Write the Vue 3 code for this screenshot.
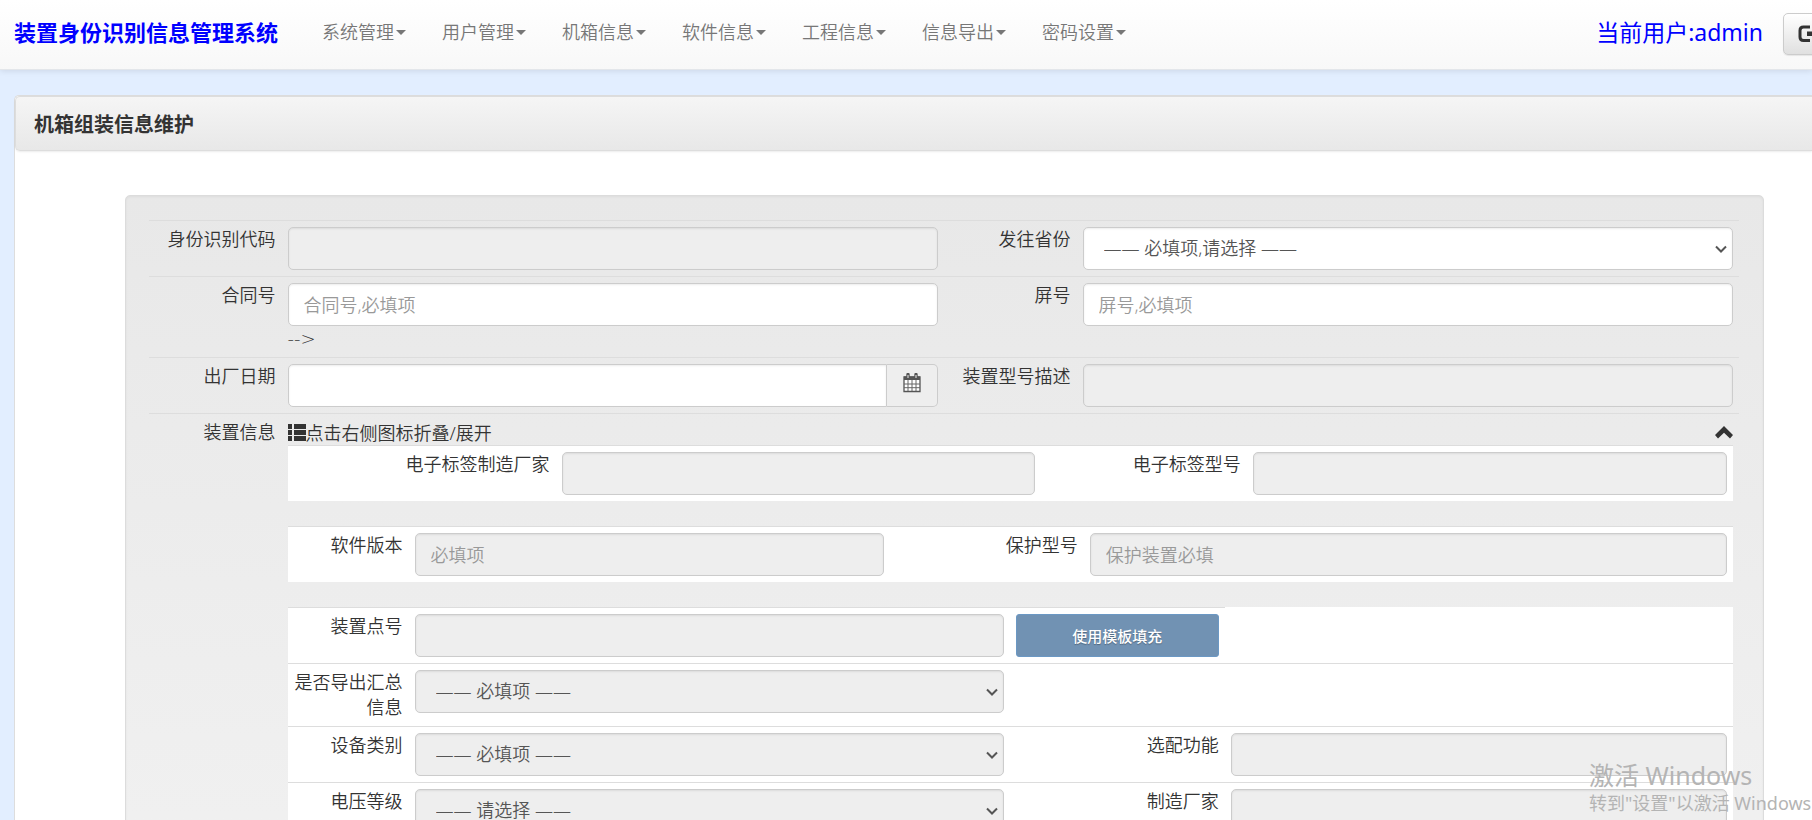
<script setup>
import { ref } from 'vue'

const menus = ['系统管理', '用户管理', '机箱信息', '软件信息', '工程信息', '信息导出', '密码设置']
const expanded = ref(true)
</script>

<template>
  <div class="page">
    <header class="navbar">
      <a class="brand" href="#">装置身份识别信息管理系统</a>
      <nav class="menu">
        <a v-for="name in menus" :key="name" class="menu-link" href="#">
          <span>{{ name }}</span><i class="caret"></i>
        </a>
      </nav>
      <a class="user" href="#">当前用户:admin</a>
      <button class="logout" type="button" aria-label="退出">
        <svg width="20" height="18" viewBox="0 0 20 18" aria-hidden="true">
          <path d="M12 2H5.500Q2 2 2 5.500V12Q2 15.500 5.500 15.500H12" fill="none" stroke="#333" stroke-width="3" />
          <path d="M9 6.500H14V2L20 8.700L14 15.500V11H9Z" fill="#333" />
        </svg>
      </button>
    </header>

    <main class="panel">
      <h1 class="panel-heading">机箱组装信息维护</h1>

      <form class="well" @submit.prevent>
        <div class="row outer">
          <label class="name" for="code">身份识别代码</label>
          <div class="cell"><input id="code" class="control" type="text" disabled></div>
          <label class="name" for="province">发往省份</label>
          <div class="cell">
            <select id="province" class="control"><option>—— 必填项,请选择 ——</option></select>
          </div>
        </div>

        <div class="row outer">
          <label class="name" for="contract">合同号</label>
          <div class="cell">
            <input id="contract" class="control" type="text" placeholder="合同号,必填项">
            <div class="note">--&gt;</div>
          </div>
          <label class="name" for="screen">屏号</label>
          <div class="cell"><input id="screen" class="control" type="text" placeholder="屏号,必填项"></div>
        </div>

        <div class="row outer">
          <label class="name" for="date">出厂日期</label>
          <div class="cell input-group">
            <input id="date" class="control" type="text">
            <button class="addon" type="button" aria-label="选择日期">
              <svg width="18" height="20" viewBox="0 0 18 20" aria-hidden="true">
                <path d="M1 4H17V18.500H1Z" fill="#fff" stroke="#555" stroke-width="1.300" />
                <path d="M1 3.500H17V7H1Z" fill="#555" />
                <path d="M5 7V18M9 7V18M13 7V18M1 11H17M1 14.700H17" fill="none" stroke="#666" stroke-width="1" />
                <path d="M5 1.500V5M13 1.500V5" fill="none" stroke="#555" stroke-width="3.400" stroke-linecap="round" />
                <path d="M5 2V5M13 2V5" fill="none" stroke="#eee" stroke-width="1" />
              </svg>
            </button>
          </div>
          <label class="name" for="model-desc">装置型号描述</label>
          <div class="cell"><input id="model-desc" class="control" type="text" disabled></div>
        </div>

        <div class="row device">
          <div class="name">装置信息</div>
          <div class="cell">
            <button class="toggle" type="button" :aria-expanded="expanded" @click="expanded = !expanded">
              <svg width="18" height="17" viewBox="0 0 18 17" aria-hidden="true">
                <path d="M0 0H4V5H0ZM6 0H18V5H6ZM0 6H4V11H0ZM6 6H18V11H6ZM0 12H4V17H0ZM6 12H18V17H6Z" fill="#333" />
              </svg>
              <span class="toggle-text">点击右侧图标折叠/展开</span>
              <svg width="18" height="13" viewBox="0 0 18 13" aria-hidden="true">
                <path d="M9 0L18 9L15 12.500L9 6.800L3 12.500L0 9Z" fill="#333" />
              </svg>
            </button>

            <template v-if="expanded">
              <section class="block">
                <div class="row tag">
                  <label class="name" for="tag-maker">电子标签制造厂家</label>
                  <div class="cell"><input id="tag-maker" class="control" type="text" disabled></div>
                  <label class="name" for="tag-model">电子标签型号</label>
                  <div class="cell"><input id="tag-model" class="control" type="text" disabled></div>
                </div>
              </section>

              <section class="block">
                <div class="row software">
                  <label class="name" for="version">软件版本</label>
                  <div class="cell"><input id="version" class="control" type="text" placeholder="必填项" disabled></div>
                  <label class="name" for="protect">保护型号</label>
                  <div class="cell"><input id="protect" class="control" type="text" placeholder="保护装置必填" disabled></div>
                </div>
              </section>

              <section class="block">
                <div class="row detail point">
                  <label class="name" for="point">装置点号</label>
                  <div class="cell"><input id="point" class="control" type="text" disabled></div>
                  <div class="cell"><button class="fill" type="button">使用模板填充</button></div>
                </div>
                <div class="row detail">
                  <label class="name" for="export">是否导出汇总信息</label>
                  <div class="cell">
                    <select id="export" class="control" disabled><option>—— 必填项 ——</option></select>
                  </div>
                </div>
                <div class="row detail">
                  <label class="name" for="category">设备类别</label>
                  <div class="cell">
                    <select id="category" class="control" disabled><option>—— 必填项 ——</option></select>
                  </div>
                  <label class="name" for="option">选配功能</label>
                  <div class="cell"><input id="option" class="control" type="text" disabled></div>
                </div>
                <div class="row detail">
                  <label class="name" for="voltage">电压等级</label>
                  <div class="cell">
                    <select id="voltage" class="control" disabled><option>—— 请选择 ——</option></select>
                  </div>
                  <label class="name" for="maker">制造厂家</label>
                  <div class="cell"><input id="maker" class="control" type="text" disabled></div>
                </div>
              </section>
            </template>
          </div>
        </div>
      </form>
    </main>

    <aside class="watermark">
      <div class="watermark-title">激活 Windows</div>
      <div>转到"设置"以激活 Windows</div>
    </aside>
  </div>
</template>

<style>
body {
  margin: 0;
  background: #e2eeff;
}
</style>

<style scoped>
.page {
  position: relative;
  display: flex;
  flex-direction: column;
  height: 100vh;
  overflow: hidden;
  color: #333;
  background: #e2eeff;
  font: 350 18px/25px "Noto Sans", "Noto Sans CJK SC", sans-serif;
}

.page * {
  box-sizing: border-box;
}

.navbar {
  display: flex;
  flex: none;
  align-items: flex-start;
  height: 70px;
  padding: 14px 0 0 14px;
  border-bottom: 1px solid #e3e6ea;
  background: linear-gradient(#fff, #f8f8f8);
  box-shadow: 0 1px 6px rgba(0, 0, 0, .1);
}

.navbar a {
  text-decoration: none;
  white-space: nowrap;
}

.brand {
  min-width: 290px;
  color: #00f;
  font-size: 22px;
  font-weight: 700;
  line-height: 36px;
}

.menu {
  display: flex;
  flex: 1;
}

.menu-link {
  display: flex;
  align-items: center;
  gap: 2px;
  padding: 0 18px;
  color: #777;
  line-height: 36px;
}

.caret {
  border: 5px solid transparent;
  border-top-color: #777;
  border-bottom: 0;
}

.user {
  color: #00f;
  font-size: 23px;
  font-weight: 400;
  line-height: 36px;
}

.logout {
  flex: none;
  width: 50px;
  height: 42px;
  margin: -1px -21px 0 20px;
  padding: 0 14px;
  border: 1px solid #ccc;
  border-radius: 5px;
  background: linear-gradient(#fff, #e0e0e0);
  box-shadow: 0 1px 1px rgba(0, 0, 0, .08);
}

.logout svg {
  display: block;
}

.panel {
  flex: 1 0 auto;
  margin: 25px 0 0 14px;
  border: 1px solid #ddd;
  border-right: 0;
  border-radius: 5px 0 0 0;
  background: #fff;
}

.panel-heading {
  margin: 0;
  padding: 15px 18px 13px;
  border: 1px solid #ddd;
  border-width: 1px 0 1px 1px;
  border-radius: 5px 0 0 5px;
  background: linear-gradient(#f5f5f5, #e8e8e8);
  box-shadow: 0 1px 2px rgba(0, 0, 0, .08);
  font-size: 20px;
  font-weight: 700;
  line-height: 25px;
}

.well {
  margin: 44px 48px 24px 110px;
  padding: 24px 24px 24px 23px;
  border: 1px solid #dcdcdc;
  border-radius: 5px;
  background: linear-gradient(#e8e8e8, #f1f1f1);
  box-shadow: inset 0 1px 3px rgba(0, 0, 0, .05);
}

.row {
  display: grid;
  border-top: 1px solid #ddd;
}

.outer {
  grid-template-columns: minmax(0, 1fr) minmax(0, 5fr) minmax(0, 1fr) minmax(0, 5fr);
}

.device {
  grid-template-columns: minmax(0, 1fr) minmax(0, 11fr);
}

.tag {
  grid-template-columns: 268fr 485fr 206fr 486fr;
}

.software {
  grid-template-columns: 121fr 481fr 194fr 649fr;
}

.detail {
  grid-template-columns: 121fr 601fr 215fr 508fr;
}

.point {
  border-top: 0;
}

.point > * {
  border-top: 1px solid #ddd;
}

.name,
.cell {
  min-width: 0;
  padding: 6px;
}

.name {
  text-align: right;
}

.note {
  font-family: "DejaVu Sans", sans-serif;
}

.control {
  display: block;
  width: 100%;
  height: 43px;
  padding: 6px 15px;
  border: 1px solid #ccc;
  border-radius: 5px;
  color: #555;
  background: #fff;
  box-shadow: inset 0 1px 2px rgba(0, 0, 0, .08);
  font: inherit;
}

select.control {
  padding-left: 20px;
  appearance: none;
  background-image: url("data:image/svg+xml,%3Csvg xmlns='http://www.w3.org/2000/svg' width='12' height='8'%3E%3Cpath d='M1 1.500L6 6.500L11 1.500' fill='none' stroke='%23555' stroke-width='2'/%3E%3C/svg%3E");
  background-repeat: no-repeat;
  background-position: right 5px center;
}

.control:disabled {
  color: #555;
  background-color: #eee;
  opacity: 1;
}

.control::placeholder {
  color: #999;
  opacity: 1;
}

.input-group {
  display: flex;
}

.input-group .control {
  flex: 1;
  border-radius: 5px 0 0 5px;
}

.addon {
  display: flex;
  align-items: center;
  justify-content: center;
  width: 51px;
  height: 43px;
  padding: 0 0 6px;
  border: 1px solid #ccc;
  border-left: 0;
  border-radius: 0 5px 5px 0;
  background: #eee;
}

.toggle {
  display: flex;
  align-items: center;
  width: 100%;
  height: 25px;
  padding: 0;
  border: 0;
  color: inherit;
  background: none;
  font: inherit;
  text-align: left;
}

.toggle-text {
  flex: 1;
  padding-top: 2px;
}

.block {
  margin-bottom: 25px;
  background: #fff;
}

.fill {
  display: block;
  width: 100%;
  height: 43px;
  border: 1px solid #6b98c4;
  border-radius: 3px;
  color: #fff;
  background: #7192b3;
  font: 500 15px/20px "Noto Sans", "Noto Sans CJK SC", sans-serif;
  text-shadow: 0 1px 1px rgba(0, 0, 0, .3);
}

.watermark {
  position: absolute;
  top: 760px;
  left: calc(100% - 223px);
  color: #b4b4b4;
  font-weight: 400;
  line-height: 24px;
  white-space: nowrap;
  pointer-events: none;
}

.watermark-title {
  font-size: 25px;
  line-height: 31px;
}
</style>
